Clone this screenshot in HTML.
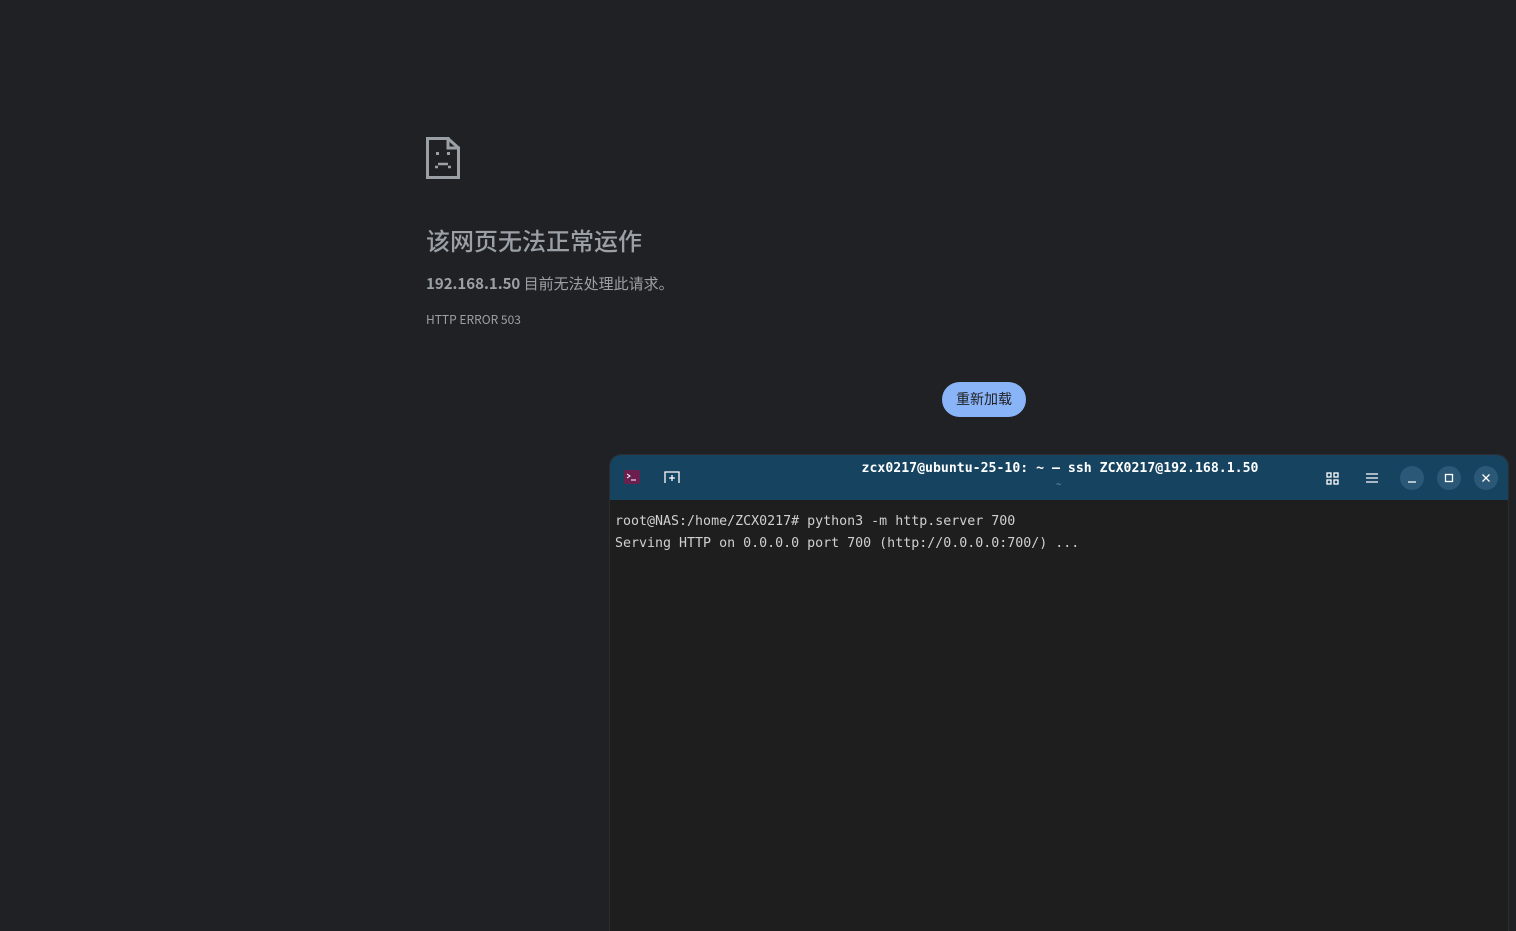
<!DOCTYPE html>
<html><head><meta charset="utf-8">
<style>
html,body{margin:0;padding:0;width:1516px;height:931px;overflow:hidden;background:#202124;}
body{position:relative;font-family:"Liberation Sans","Noto Sans CJK SC",sans-serif;}
.icon{position:absolute;left:426px;top:137px;}
h1{position:absolute;left:426px;top:222px;margin:0;font-size:24px;font-weight:500;color:#9aa0a6;font-family:"Noto Sans CJK SC",sans-serif;}
.sub{position:absolute;left:426px;top:273px;font-size:15px;color:#9aa0a6;font-family:"Noto Sans CJK SC",sans-serif;}
.sub b{font-weight:700;}
.code{position:absolute;left:426px;top:311px;font-size:12px;color:#9aa0a6;font-family:"Noto Sans CJK SC",sans-serif;}
.btn{position:absolute;left:942px;top:382px;width:84px;height:35px;border-radius:18px;background:#8ab4f8;color:#202124;font-size:14px;line-height:35px;text-align:center;font-family:"Noto Sans CJK SC",sans-serif;}
.term{position:absolute;left:609px;top:454px;width:898px;height:490px;background:#1e1e1e;border-radius:12px 12px 0 0;border:1px solid #2e2e2e;overflow:hidden;}
.bar{height:45px;background:#154360;position:relative;}
.title{position:absolute;left:0;right:0;top:6px;text-align:center;color:#fff;font:bold 13.2px "DejaVu Sans Mono","Liberation Mono",monospace;padding-left:2px;}
.tilde{position:absolute;left:446px;top:24px;color:#8fa6b8;font-size:9px;}
.cb{position:absolute;top:11px;width:24px;height:24px;border-radius:50%;background:#2c5877;}
.out{position:absolute;left:5px;top:56px;color:#d0d0d0;font:13.3px/22px "DejaVu Sans Mono","Liberation Mono",monospace;white-space:pre;}
</style></head><body>
<svg class="icon" width="34" height="42" viewBox="0 0 34 42">
<path d="M1.5 1.5H22V11H32.5V40.5H1.5Z M22 1.5L32.5 11" fill="none" stroke="#9aa0a6" stroke-width="3"/>
<rect x="10" y="15" width="3" height="3" fill="#9aa0a6"/>
<rect x="21" y="15" width="3" height="3" fill="#9aa0a6"/>
<path d="M12 27h10M9 30h3M22 30h3" stroke="#9aa0a6" stroke-width="2.5"/>
</svg>
<h1>该网页无法正常运作</h1>
<div class="sub"><b>192.168.1.50</b> 目前无法处理此请求。</div>
<div class="code">HTTP ERROR 503</div>
<div class="btn">重新加载</div>
<div class="term">
<div class="bar">
<svg style="position:absolute;left:14px;top:15px" width="16" height="14"><rect width="16" height="14" rx="2" fill="#6b1f4f"/><path d="M3 4l3 2-3 2M7 10h5" stroke="#fff" stroke-width="1" fill="none"/></svg>
<svg style="position:absolute;left:54px;top:15px" width="16" height="14"><path d="M1 13V2h14v11M8 5v6M5 8h6" stroke="#fff" stroke-width="1.3" fill="none"/></svg>
<div class="title">zcx0217@ubuntu-25-10: ~ — ssh ZCX0217@192.168.1.50</div>
<div class="tilde">~</div>
<svg style="position:absolute;left:716px;top:17px" width="13" height="13"><g fill="none" stroke="#fff" stroke-width="1.3"><rect x="1" y="1" width="4" height="4"/><rect x="8" y="1" width="4" height="4"/><rect x="1" y="8" width="4" height="4"/><rect x="8" y="8" width="4" height="4"/></g></svg>
<svg style="position:absolute;left:756px;top:17px" width="12" height="12"><path d="M0 2h12M0 6h12M0 10h12" stroke="#fff" stroke-width="1.3"/></svg>
<div class="cb" style="left:790px"><svg width="24" height="24"><path d="M8 16h8" stroke="#fff" stroke-width="1.3"/></svg></div>
<div class="cb" style="left:827px"><svg width="24" height="24"><rect x="8.5" y="8.5" width="7" height="7" fill="none" stroke="#fff" stroke-width="1.3"/></svg></div>
<div class="cb" style="left:864px"><svg width="24" height="24"><path d="M8.5 8.5l7 7M15.5 8.5l-7 7" stroke="#fff" stroke-width="1.3"/></svg></div>
</div>
<div class="out">root@NAS:/home/ZCX0217# python3 -m http.server 700
Serving HTTP on 0.0.0.0 port 700 (http://0.0.0.0:700/) ...</div>
</div>
</body></html>
